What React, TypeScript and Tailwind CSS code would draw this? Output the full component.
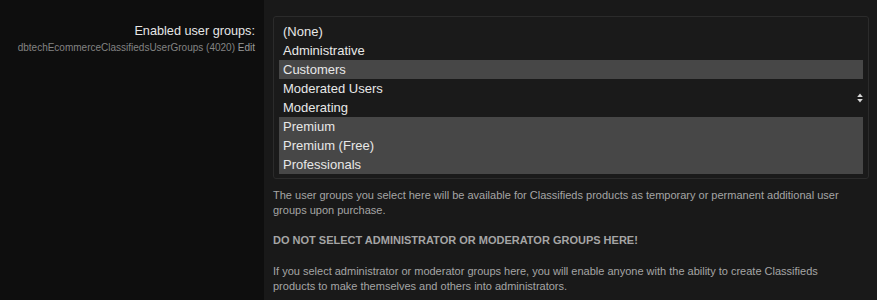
import React from 'react';

const GROUPS = [
  { name: '(None)', selected: false },
  { name: 'Administrative', selected: false },
  { name: 'Customers', selected: true },
  { name: 'Moderated Users', selected: false },
  { name: 'Moderating', selected: false },
  { name: 'Premium', selected: true },
  { name: 'Premium (Free)', selected: true },
  { name: 'Professionals', selected: true },
];

export default function App() {
  return (
    <div
      className="flex w-[877px] h-[300px] overflow-hidden bg-[#191919]"
      style={{ fontFamily: '"Liberation Sans", Arial, sans-serif' }}
    >
      {/* Label column */}
      <div className="w-[264px] shrink-0 bg-[#0e0e0e] flex flex-col items-end pr-[9px] pt-[23px]">
        <div className="text-[12.7px] leading-[16px] text-[#e6e6e6]">Enabled user groups:</div>
        <div className="text-[10px] leading-[13px] text-[#838383] mt-[2px] whitespace-nowrap">
          dbtechEcommerceClassifiedsUserGroups (4020) <span className="text-[#9a9a9a]">Edit</span>
        </div>
      </div>

      {/* Field column */}
      <div className="flex-1 pl-[9px] pt-[16px]">
        {/* Multi select */}
        <div className="relative w-[596px] border border-[#2b2b2b] rounded-[3px] bg-[#1a1a1a] px-[5px] pt-[5px] pb-[4px]">
          {GROUPS.map(g => (
            <div
              key={g.name}
              className={`h-[19px] pl-[4px] text-[13px] leading-[19px] text-[#e8e8e8] ${
                g.selected ? 'bg-[#474747]' : ''
              }`}
            >
              {g.name}
            </div>
          ))}
          <svg
            className="absolute right-[5px] top-[76px]"
            width="6"
            height="10"
            viewBox="0 0 6 10"
          >
            <path d="M3 0.5 L5.8 4 L0.2 4 Z" fill="#d8d8d8" />
            <path d="M3 9.5 L5.8 6 L0.2 6 Z" fill="#d8d8d8" />
          </svg>
        </div>

        {/* Explanation */}
        <div className="w-[585px] text-[11px] leading-[15px] text-[#a5a5a5] mt-[9px]">
          <p>
            The user groups you select here will be available for Classifieds products as temporary or permanent
            additional user groups upon purchase.
          </p>
          <p className="mt-[15px] font-bold">DO NOT SELECT ADMINISTRATOR OR MODERATOR GROUPS HERE!</p>
          <p className="mt-[16px]">
            If you select administrator or moderator groups here, you will enable anyone with the ability to create
            Classifieds products to make themselves and others into administrators.
          </p>
        </div>
      </div>
    </div>
  );
}
